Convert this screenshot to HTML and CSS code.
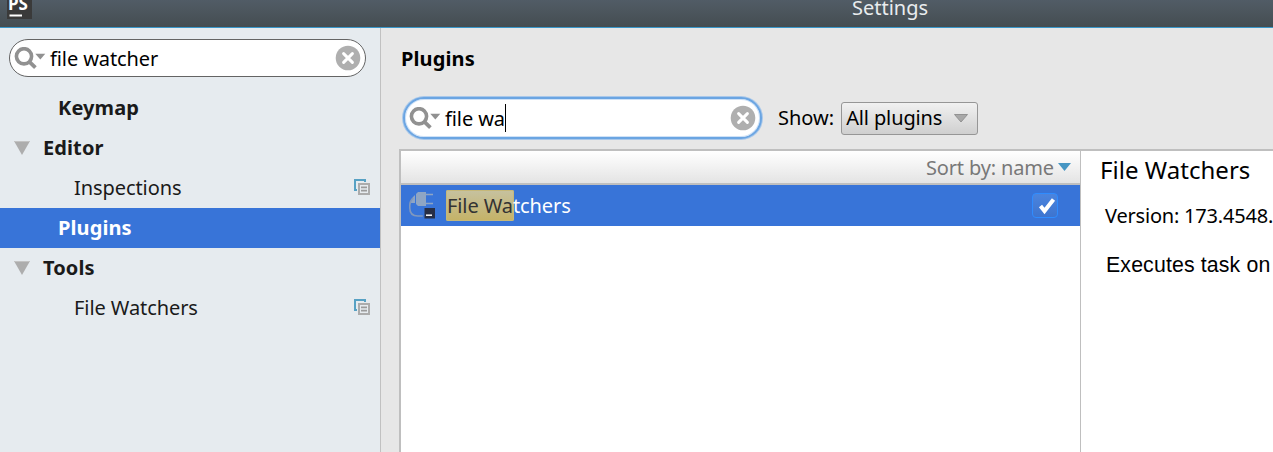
FILE: index.html
```html
<!DOCTYPE html>
<html lang="en">
<head>
<meta charset="utf-8">
<title>Settings</title>
<link rel="stylesheet" href="styles.css">
</head>
<body>
<svg class="defs" width="0" height="0" aria-hidden="true">
  <symbol id="search" viewBox="0 0 32 24">
    <circle cx="10" cy="9.3" r="7.6" fill="none" stroke="#919191" stroke-width="3.6"/>
    <path d="M15.2 14.6l6.2 6" stroke="#919191" stroke-width="3.8" fill="none"/>
    <path d="M21.3 6.8h10l-5 5.8z" fill="#919191"/>
  </symbol>
  <symbol id="clear" viewBox="0 0 26 26">
    <circle cx="13" cy="13" r="12.3" fill="#afafaf"/>
    <path d="M8.6 8.6l8.8 8.8M17.4 8.6l-8.8 8.8" stroke="#fff" stroke-width="3" stroke-linecap="round"/>
  </symbol>
  <symbol id="scope" viewBox="0 0 16 16">
    <path d="M11 3V1H1v10h2" fill="none" stroke="#57a1c4" stroke-width="2"/>
    <path d="M5 5h10v10H5z" fill="#e6ebef" stroke="#acacac" stroke-width="2"/>
    <path d="M7 8.3h6M7 11.7h6" stroke="#9b9b9b" stroke-width="1.7"/>
  </symbol>
</svg>
<div class="window">
  <header class="titlebar">
    <svg class="logo" width="25" height="19" viewBox="0 0 25 19">
      <rect width="25" height="19" fill="#3a3a3a"/>
      <text class="logo-text" x="1" y="9.5">PS</text>
      <rect x="2.5" y="14.5" width="12.5" height="2" fill="#fff"/>
    </svg>
    <h1 class="title">Settings</h1>
  </header>
  <div class="content">
    <aside class="sidebar">
      <div class="search">
        <svg class="search-icon"><use href="#search"/></svg>
        <span class="query">file watcher</span>
        <svg class="clear-icon"><use href="#clear"/></svg>
      </div>
      <ul class="tree">
        <li class="node section">Keymap</li>
        <li class="node group"><svg class="twisty" viewBox="0 0 16 14"><path d="M0 0h16L8 14z"/><path class="edge" d="M0 0h16v1H0z"/></svg>Editor</li>
        <li class="node leaf">Inspections<svg class="scope"><use href="#scope"/></svg></li>
        <li class="node section selected">Plugins</li>
        <li class="node group"><svg class="twisty" viewBox="0 0 16 14"><path d="M0 0h16L8 14z"/><path class="edge" d="M0 0h16v1H0z"/></svg>Tools</li>
        <li class="node leaf">File Watchers<svg class="scope"><use href="#scope"/></svg></li>
      </ul>
    </aside>
    <main class="main">
      <h2 class="heading">Plugins</h2>
      <div class="toolbar">
        <div class="search focused">
          <svg class="search-icon"><use href="#search"/></svg>
          <span class="query">file wa</span><span class="caret"></span>
          <svg class="clear-icon"><use href="#clear"/></svg>
        </div>
        <span class="label">Show:</span>
        <div class="select">All plugins<svg class="arrow" viewBox="0 0 14 9"><path d="M.5.5h13L7 8z" fill="#a8a8a8" stroke="#929292"/></svg></div>
      </div>
      <div class="panes">
        <section class="list">
          <div class="sort">Sort by: name<svg class="sort-arrow" viewBox="0 0 13 8"><path d="M0 0h13L6.5 8z" fill="#4696c3"/></svg></div>
          <div class="plugin">
            <svg class="plug" width="27" height="27" viewBox="0 0 27 27">
              <path d="M6 3v8L1.500 11Q2 6 6 3zM7 2l2-2h8v14H9l-2-2z" fill="#8ea5c4"/>
              <path d="M17 2.500h7M17 11.500h7" stroke="#8ea5c4" stroke-width="1.6"/>
              <path d="M4 6Q.8 9 .8 13v3q0 8 8 8h5" fill="none" stroke="#8098bd" stroke-width="1.6"/>
              <rect x="15.500" y="16" width="10.500" height="10.500" fill="#272e45"/>
              <path d="M17 23.200h6" stroke="#fff" stroke-width="1.5"/>
            </svg>
            <span class="name"><mark class="hit">File Wa</mark>tchers</span>
            <span class="check"><svg width="24" height="23" viewBox="0 0 24 23"><path d="M7.500 12l4 5L20.500 5.500" fill="none" stroke="#fff" stroke-width="4"/></svg></span>
          </div>
        </section>
        <section class="details">
          <h3 class="plugin-title">File Watchers</h3>
          <p class="version">Version: 173.4548.</p>
          <p class="description">Executes task on</p>
        </section>
      </div>
    </main>
  </div>
</div>
</body>
</html>
```

FILE: styles.css
```css
* { box-sizing: border-box; }
body { margin: 0; font: 20px/28px "Noto Sans", sans-serif; color: #000; overflow: hidden; letter-spacing: -.1px; }
h1, h2, h3, p, ul { margin: 0; padding: 0; font-size: inherit; }
svg { display: block; flex: none; }
.defs { position: absolute; }
.window { width: 1273px; height: 452px; display: flex; flex-direction: column; overflow: hidden; background: #e7e7e7; }
.titlebar { height: 28px; flex: none; display: flex; align-items: flex-start; background: linear-gradient(#515c66, #454d51) padding-box; border-bottom: 1px solid #3a97c9; padding-left: 7px; }
.logo-text { font: bold 17px "Noto Sans", sans-serif; fill: #fff; letter-spacing: 0; }
.title { margin: -6px 0 0 820px; font-weight: 400; color: #e9ecee; letter-spacing: 0; }
.content { flex: 1; display: flex; min-height: 0; }
.sidebar { width: 381px; flex: none; background: #e6ebef; border-right: 1px solid #c1c1c1; padding-top: 11px; }
.search { width: 357px; height: 38px; margin-left: 9px; display: flex; align-items: center; background: #fff; border: 1px solid #646464; border-radius: 19px; padding: 0 4px; }
.search-icon { width: 32px; height: 24px; margin-top: 2px; }
.query { margin: 2px 0 0 4px; white-space: pre; }
.clear-icon { width: 26px; height: 26px; margin-left: auto; }
.tree { list-style: none; padding-top: 11px; }
.node { height: 40px; display: flex; align-items: center; color: #1a1a1a; padding-right: 10px; }
.section { padding-left: 58px; font-weight: 700; letter-spacing: .1px; }
.group { padding-left: 14px; font-weight: 700; letter-spacing: .1px; }
.leaf { padding-left: 74px; letter-spacing: -.08px; }
.selected { background: #3874d8; color: #fff; }
.twisty { width: 16px; height: 14px; margin-right: 13px; fill: #adadad; }
.edge { fill: #c3c3c3; }
.scope { width: 16px; height: 16px; margin: -2px 0 0 auto; }
.main { flex: 1; min-width: 0; display: flex; flex-direction: column; padding: 17px 0 0 18px; }
.heading { padding-left: 2px; font-weight: 700; letter-spacing: .12px; }
.toolbar { height: 42px; margin-top: 24px; display: flex; align-items: center; padding-left: 4px; }
.focused { width: 359px; height: 42px; margin-left: 0; border: 2px solid #6ba5e2; border-radius: 21px; box-shadow: 0 0 0 1px #a9c8ea, inset 0 0 0 1px #cfe2f7; padding: 0 4px; }
.caret { width: 1px; height: 28px; background: #000; }
.label { margin-left: 16px; letter-spacing: 0; }
.select { width: 137px; height: 33px; margin-left: 7px; display: flex; align-items: center; border: 1px solid #969696; border-radius: 3px; background: linear-gradient(#f1f1f1, #cfcfcf); padding: 0 9px 0 4px; letter-spacing: -.12px; }
.arrow { width: 14px; height: 9px; margin: 0 0 0 auto; }
.panes { flex: 1; margin-top: 10px; display: flex; border: solid #bfbfbf; border-width: 2px 0 0 2px; background: #fff; min-height: 0; }
.list { width: 680px; flex: none; border-right: 1px solid #bfbfbf; }
.sort { height: 34px; display: flex; align-items: center; justify-content: flex-end; color: #787878; background: linear-gradient(#fff, #e4e4e4); border-bottom: 2px solid #bfbfbf; padding: 1px 9px 0 0; letter-spacing: -.15px; }
.sort-arrow { width: 13px; height: 8px; margin: -2px 0 0 4px; }
.plugin { height: 41px; display: flex; align-items: center; color: #fff; background: #3874d8; padding: 0 22px 0 8px; }
.name { margin: 0 0 0 10px; }
.hit { display: inline-block; height: 31px; line-height: 32px; padding: 0 1px; margin-right: -1px; border-radius: 2px; color: #333; background: linear-gradient(#c6c2a0, #c5b266); box-shadow: inset 0 0 0 1px #c6b879; }
.check { width: 26px; height: 25px; margin-left: auto; border: 1px solid #2f8cff; border-radius: 4px; background: linear-gradient(#4b84de, #3d74cf); }
.details { padding-left: 19px; white-space: nowrap; }
.plugin-title { margin-top: 2px; font-size: 24px; line-height: 33px; font-weight: 400; letter-spacing: .04px; }
.version { margin: 16px 0 0 5px; letter-spacing: -.2px; }
.description { margin: 21px 0 0 6px; font-family: "Liberation Sans", Arial, sans-serif; font-size: 21.3px; letter-spacing: .14px; }
```
